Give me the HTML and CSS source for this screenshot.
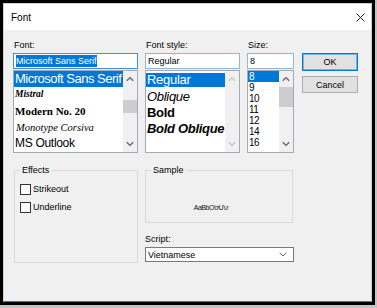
FILE: index.html
```html
<!DOCTYPE html>
<html>

<head>
    <link rel="stylesheet" href="styles.css">
</head>

<body>
    <div class="frame">
        <div class="dialog">
            <div class="titlebar">
                <span class="title">Font</span>
                <svg class="close" width="9" height="9" viewBox="0 0 9 9">
                    <path d="M0.5 0.5 L8.5 8.5 M8.5 0.5 L0.5 8.5" stroke="#222" stroke-width="1" fill="none" />
                </svg>
            </div>
            <div class="content">
                <!-- pickers -->
                <div class="pickers">
                    <div class="col col-font">
                        <span class="lbl">Font:</span>
                        <div class="textbox focused"><span class="seltext">Microsoft Sans Serif</span></div>
                        <div class="listbox">
                            <ul class="items">
                                <li class="item selected f-mss">Microsoft Sans Serif</li>
                                <li class="item f-mistral">Mistral</li>
                                <li class="item f-modern">Modern No. 20</li>
                                <li class="item f-corsiva">Monotype Corsiva</li>
                                <li class="item f-outlook">MS Outlook</li>
                            </ul>
                            <div class="scrollbar">
                                <svg class="arrow" width="8" height="6" viewBox="0 0 8 6"><polyline points="0.8,4.8 4,1.6 7.2,4.8" /></svg>
                                <div class="track"><div class="thumb thumb-font"></div></div>
                                <svg class="arrow" width="8" height="6" viewBox="0 0 8 6"><polyline points="0.8,1.2 4,4.4 7.2,1.2" /></svg>
                            </div>
                        </div>
                    </div>
                    <div class="col col-style">
                        <span class="lbl">Font style:</span>
                        <div class="textbox">Regular</div>
                        <div class="listbox">
                            <ul class="items style-items">
                                <li class="item selected s-regular">Regular</li>
                                <li class="item s-oblique">Oblique</li>
                                <li class="item s-bold">Bold</li>
                                <li class="item s-boldoblique">Bold Oblique</li>
                            </ul>
                            <div class="scrollbar disabled">
                                <svg class="arrow" width="8" height="6" viewBox="0 0 8 6"><polyline points="0.8,4.8 4,1.6 7.2,4.8" /></svg>
                                <div class="track"></div>
                                <svg class="arrow" width="8" height="6" viewBox="0 0 8 6"><polyline points="0.8,1.2 4,4.4 7.2,1.2" /></svg>
                            </div>
                        </div>
                    </div>
                    <div class="col col-size">
                        <span class="lbl">Size:</span>
                        <div class="textbox">8</div>
                        <div class="listbox">
                            <ul class="items size-items">
                                <li class="item selected">8</li>
                                <li class="item">9</li>
                                <li class="item">10</li>
                                <li class="item">11</li>
                                <li class="item">12</li>
                                <li class="item">14</li>
                                <li class="item">16</li>
                            </ul>
                            <div class="scrollbar">
                                <svg class="arrow" width="8" height="6" viewBox="0 0 8 6"><polyline points="0.8,4.8 4,1.6 7.2,4.8" /></svg>
                                <div class="track"><div class="thumb thumb-size"></div></div>
                                <svg class="arrow" width="8" height="6" viewBox="0 0 8 6"><polyline points="0.8,1.2 4,4.4 7.2,1.2" /></svg>
                            </div>
                        </div>
                    </div>
                    <div class="buttons">
                        <button class="btn default">OK</button>
                        <button class="btn">Cancel</button>
                    </div>
                </div>

                <!-- effects, sample, script -->
                <div class="lower">
                    <fieldset class="group effects">
                        <legend>Effects</legend>
                        <div class="effects-body">
                            <div class="check"><span class="box"></span>Strikeout</div>
                            <div class="check"><span class="box"></span>Underline</div>
                        </div>
                    </fieldset>
                    <div class="right-col">
                        <fieldset class="group sample">
                            <legend>Sample</legend>
                            <div class="sample-body">AaBbƠơƯư</div>
                        </fieldset>
                        <span class="lbl script-lbl">Script:</span>
                        <div class="select">
                            <span>Vietnamese</span>
                            <svg width="8" height="5" viewBox="0 0 8 5"><polyline points="0.6,0.8 4,4 7.4,0.8" fill="none" stroke="#666" stroke-width="1" /></svg>
                        </div>
                    </div>
                </div>
            </div>
        </div>
    </div>
</body>

</html>
```

FILE: styles.css
```css
* {
    margin: 0;
    padding: 0;
    box-sizing: border-box;
    font-family: "Liberation Sans", Arial, sans-serif;
}

body {
    width: 377px;
    height: 308px;
    background-color: #c4c4c4;
    overflow: hidden;
}

.frame {
    width: 375px;
    height: 305px;
    border: 3px solid #000;
}

.dialog {
    height: 100%;
    background-color: #f0f0f0;
    border: 1px solid #cfcfcf;
    border-bottom-color: #1c7fd0;
    display: flex;
    flex-direction: column;
    color: #000;
}

.titlebar {
    height: 26px;
    background-color: #fff;
    display: flex;
    align-items: center;
    justify-content: space-between;
    padding: 0 6px 0 7px;
}

.title {
    font-size: 10px;
}

.close {
    display: block;
    margin-top: 1px;
}

.content {
    padding: 9px 0 0 9px;
}

.pickers {
    display: flex;
}

.col {
    display: flex;
    flex-direction: column;
}

.col-font {
    width: 125px;
}

.col-style {
    width: 95px;
    margin-left: 7px;
}

.col-size {
    width: 47px;
    margin-left: 7px;
}

.lbl {
    display: block;
    font-size: 9px;
    line-height: 12px;
    height: 12px;
    padding-left: 1px;
}

.textbox {
    margin-top: 2px;
    height: 16px;
    border: 1px solid #93b4d4;
    background-color: #fff;
    font-size: 9px;
    line-height: 14px;
    padding-left: 2px;
    white-space: nowrap;
    overflow: hidden;
}

.textbox.focused {
    border-color: #3f8fd8;
}

.seltext {
    background-color: #0078d7;
    color: #fff;
    padding: 1px 0;
}

.listbox {
    margin-top: 1px;
    height: 83px;
    border: 1px solid #a3aab3;
    background-color: #fff;
    display: flex;
    overflow: hidden;
}

.items {
    list-style: none;
    flex: 1;
    min-width: 0;
    overflow: hidden;
}

.item {
    white-space: nowrap;
    padding-left: 1px;
    overflow: hidden;
}

.item.selected {
    background-color: #0078d7;
    color: #fff;
}

/* font list rows */
.f-mss {
    font-size: 13px;
    letter-spacing: -0.5px;
    height: 16px;
    line-height: 16px;
}

.f-mistral {
    font-family: "Liberation Serif", serif;
    font-style: italic;
    font-weight: bold;
    font-size: 9.5px;
    height: 15px;
    line-height: 15px;
}

.f-modern {
    font-family: "Liberation Serif", serif;
    font-weight: bold;
    font-size: 11px;
    height: 18px;
    line-height: 18px;
}

.f-corsiva {
    font-family: "Liberation Serif", serif;
    font-style: italic;
    font-size: 10.5px;
    height: 15px;
    line-height: 15px;
    padding-left: 2px;
}

.f-outlook {
    font-size: 12px;
    letter-spacing: -0.3px;
    height: 16px;
    line-height: 16px;
}

/* style list rows */
.style-items {
    padding-top: 2px;
}

.style-items .item {
    font-size: 13px;
    letter-spacing: -0.3px;
    height: 16px;
    line-height: 16px;
}

.style-items .selected {
    height: 14px;
    line-height: 14px;
    margin-bottom: 2px;
}

.s-oblique {
    font-style: italic;
}

.s-bold {
    font-weight: bold;
}

.s-boldoblique {
    font-weight: bold;
    font-style: italic;
}

/* size list rows */
.size-items .item {
    font-size: 10px;
    letter-spacing: -0.6px;
    height: 11px;
    line-height: 11px;
}

.scrollbar {
    width: 14px;
    background-color: #f0f0f0;
    display: flex;
    flex-direction: column;
    align-items: center;
}

.arrow {
    display: block;
    margin: 5px 0;
    fill: none;
    stroke: #606060;
    stroke-width: 1.3;
}

.disabled .arrow {
    stroke: #c4c4c4;
}

.track {
    flex: 1;
    width: 100%;
}

.thumb {
    width: 100%;
    background-color: #cdcdcd;
}

.thumb-font {
    margin-top: 13px;
    height: 13px;
}

.thumb-size {
    height: 20px;
}

.buttons {
    width: 56px;
    margin-left: 8px;
    padding-top: 14px;
    display: flex;
    flex-direction: column;
}

.btn {
    height: 18px;
    background-color: #e1e1e1;
    border: 1px solid #adadad;
    font-size: 9px;
    color: #000;
}

.btn.default {
    border-color: #0078d7;
    box-shadow: inset 0 0 0 1px #78b2e6;
}

.btn + .btn {
    margin-top: 5px;
    height: 17px;
}

.lower {
    display: flex;
    align-items: flex-start;
    margin-top: 11px;
}

.group {
    border: 1px solid #dadada;
    padding: 0;
    min-width: 0;
}

.group legend {
    font-size: 9px;
    line-height: 12px;
    padding: 0 2px;
    margin-left: 5px;
}

.effects {
    width: 124px;
    margin-left: 1px;
}

.effects-body {
    height: 86px;
    padding: 8px 0 0 5px;
}

.check {
    display: flex;
    align-items: center;
    height: 18px;
    font-size: 9px;
    margin-top: -4px;
}

.check + .check {
    margin-top: 0;
}

.box {
    width: 11px;
    height: 11px;
    border: 1px solid #333;
    background-color: #fff;
    margin-right: 2px;
}

.right-col {
    margin-left: 7px;
    display: flex;
    flex-direction: column;
}

.sample {
    width: 148px;
}

.sample-body {
    height: 46px;
    padding: 27px 16px 0 0;
    text-align: center;
    font-size: 7px;
    letter-spacing: -0.5px;
    line-height: 10px;
    color: #111;
}

.script-lbl {
    margin-top: 10px;
    padding-left: 0;
}

.select {
    margin-top: 2px;
    width: 149px;
    height: 15px;
    border: 1px solid #7a7a7a;
    background-color: #fff;
    display: flex;
    align-items: center;
    justify-content: space-between;
    padding: 0 6px 0 2px;
    font-size: 9px;
}
```
